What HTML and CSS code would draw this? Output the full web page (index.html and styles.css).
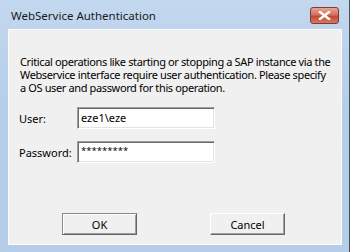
FILE: index.html
```html
<!doctype html>
<html lang="en">

<head>
	<meta charset="UTF-8">
	<title>WebService Authentication</title>
	<link rel="stylesheet" href="styles.css">
</head>

<body>
	<div class="Window">
		<div class="TitleBar">
			<span class="Title">WebService Authentication</span>
			<span class="Close">
				<svg width="13" height="9" viewBox="0 0 13 9">
					<path d="M2 1 L11 8 M11 1 L2 8" stroke="#fff" stroke-width="2.4" stroke-linecap="square" />
				</svg>
			</span>
		</div>
		<div class="Client">
			<p class="Message">
				<span class="Line">Critical operations like starting or stopping a SAP instance via the</span>
				<span class="Line">Webservice interface require user authentication. Please specify</span>
				<span class="Line">a OS user and password for this operation.</span>
			</p>
			<div class="Row">
				<label class="Label" for="user">User:</label>
				<input type="text" id="user" class="Field" value="eze1\eze" />
			</div>
			<div class="Row">
				<label class="Label" for="pass">Password:</label>
				<input type="text" id="pass" class="Field Secret" value="*********" />
			</div>
			<div class="Buttons">
				<button class="Button Default">OK</button>
				<button class="Button">Cancel</button>
			</div>
		</div>
	</div>
</body>

</html>
```

FILE: styles.css
```css
body {
	margin: 0;
	font-family: "Noto Sans", "Liberation Sans", sans-serif;
	font-size: 11px;
	color: #000;
}

div.Window {
	width: 349px;
	height: 252px;
	display: flex;
	flex-direction: column;
	background: linear-gradient(#c3d8ef, #b7cee9 40%, #b6cde8);
	border-right: 1px solid #44515e;
}

div.TitleBar {
	height: 29px;
	display: flex;
	align-items: center;
	justify-content: space-between;
	padding: 0 10px 0 11px;
}

span.Title {
	color: #1a1a1a;
	font-size: 11.5px;
	padding-top: 2px;
}

span.Close {
	width: 27px;
	height: 15px;
	margin-top: 2px;
	display: flex;
	align-items: center;
	justify-content: center;
	border: 1px solid #7b3c35;
	border-radius: 3px;
	background: linear-gradient(#e8a493, #d3735f 45%, #c24a33 55%, #d47a5f);
}

div.Client {
	flex: 1;
	margin: 0 7px 7px 8px;
	padding: 0 10px 0 10px;
	background: #f0f0f0;
	border: 1px solid #f9fbfd;
	display: flex;
	flex-direction: column;
}

p.Message {
	margin: 25px 0 13px 1px;
	line-height: 13px;
	letter-spacing: -0.37px;
	display: flex;
	flex-direction: column;
}

span.Line {
	white-space: nowrap;
}

div.Row {
	display: flex;
	align-items: center;
	margin-bottom: 12px;
}

label.Label {
	width: 58px;
}

input.Field {
	width: 138px;
	height: 22px;
	box-sizing: border-box;
	margin: 0;
	padding: 0 0 2px 3px;
	font: inherit;
	color: #000;
	background: #fff;
	border: 1px solid;
	border-color: #a0a0a0 #fff #fff #a0a0a0;
	box-shadow: inset 1px 1px 0 #696969, inset -1px -1px 0 #e3e3e3;
	outline: none;
}

input.Secret {
	font-size: 9.5px;
	padding-bottom: 4px;
}

div.Buttons {
	display: flex;
	gap: 73px;
	padding-left: 43px;
	margin-top: 38px;
}

button.Button {
	width: 75px;
	height: 22px;
	margin: 0;
	padding: 0;
	font: inherit;
	color: #000;
	background: #f0f0f0;
	border: 1px solid;
	border-color: #fff #696969 #696969 #fff;
	box-shadow: inset -1px -1px 0 #a0a0a0;
}

button.Default {
	border-color: #8a8a8a #646464 #646464 #8a8a8a;
	box-shadow: inset 1px 1px 0 #fff, inset -1px -1px 0 #a0a0a0;
}
```
